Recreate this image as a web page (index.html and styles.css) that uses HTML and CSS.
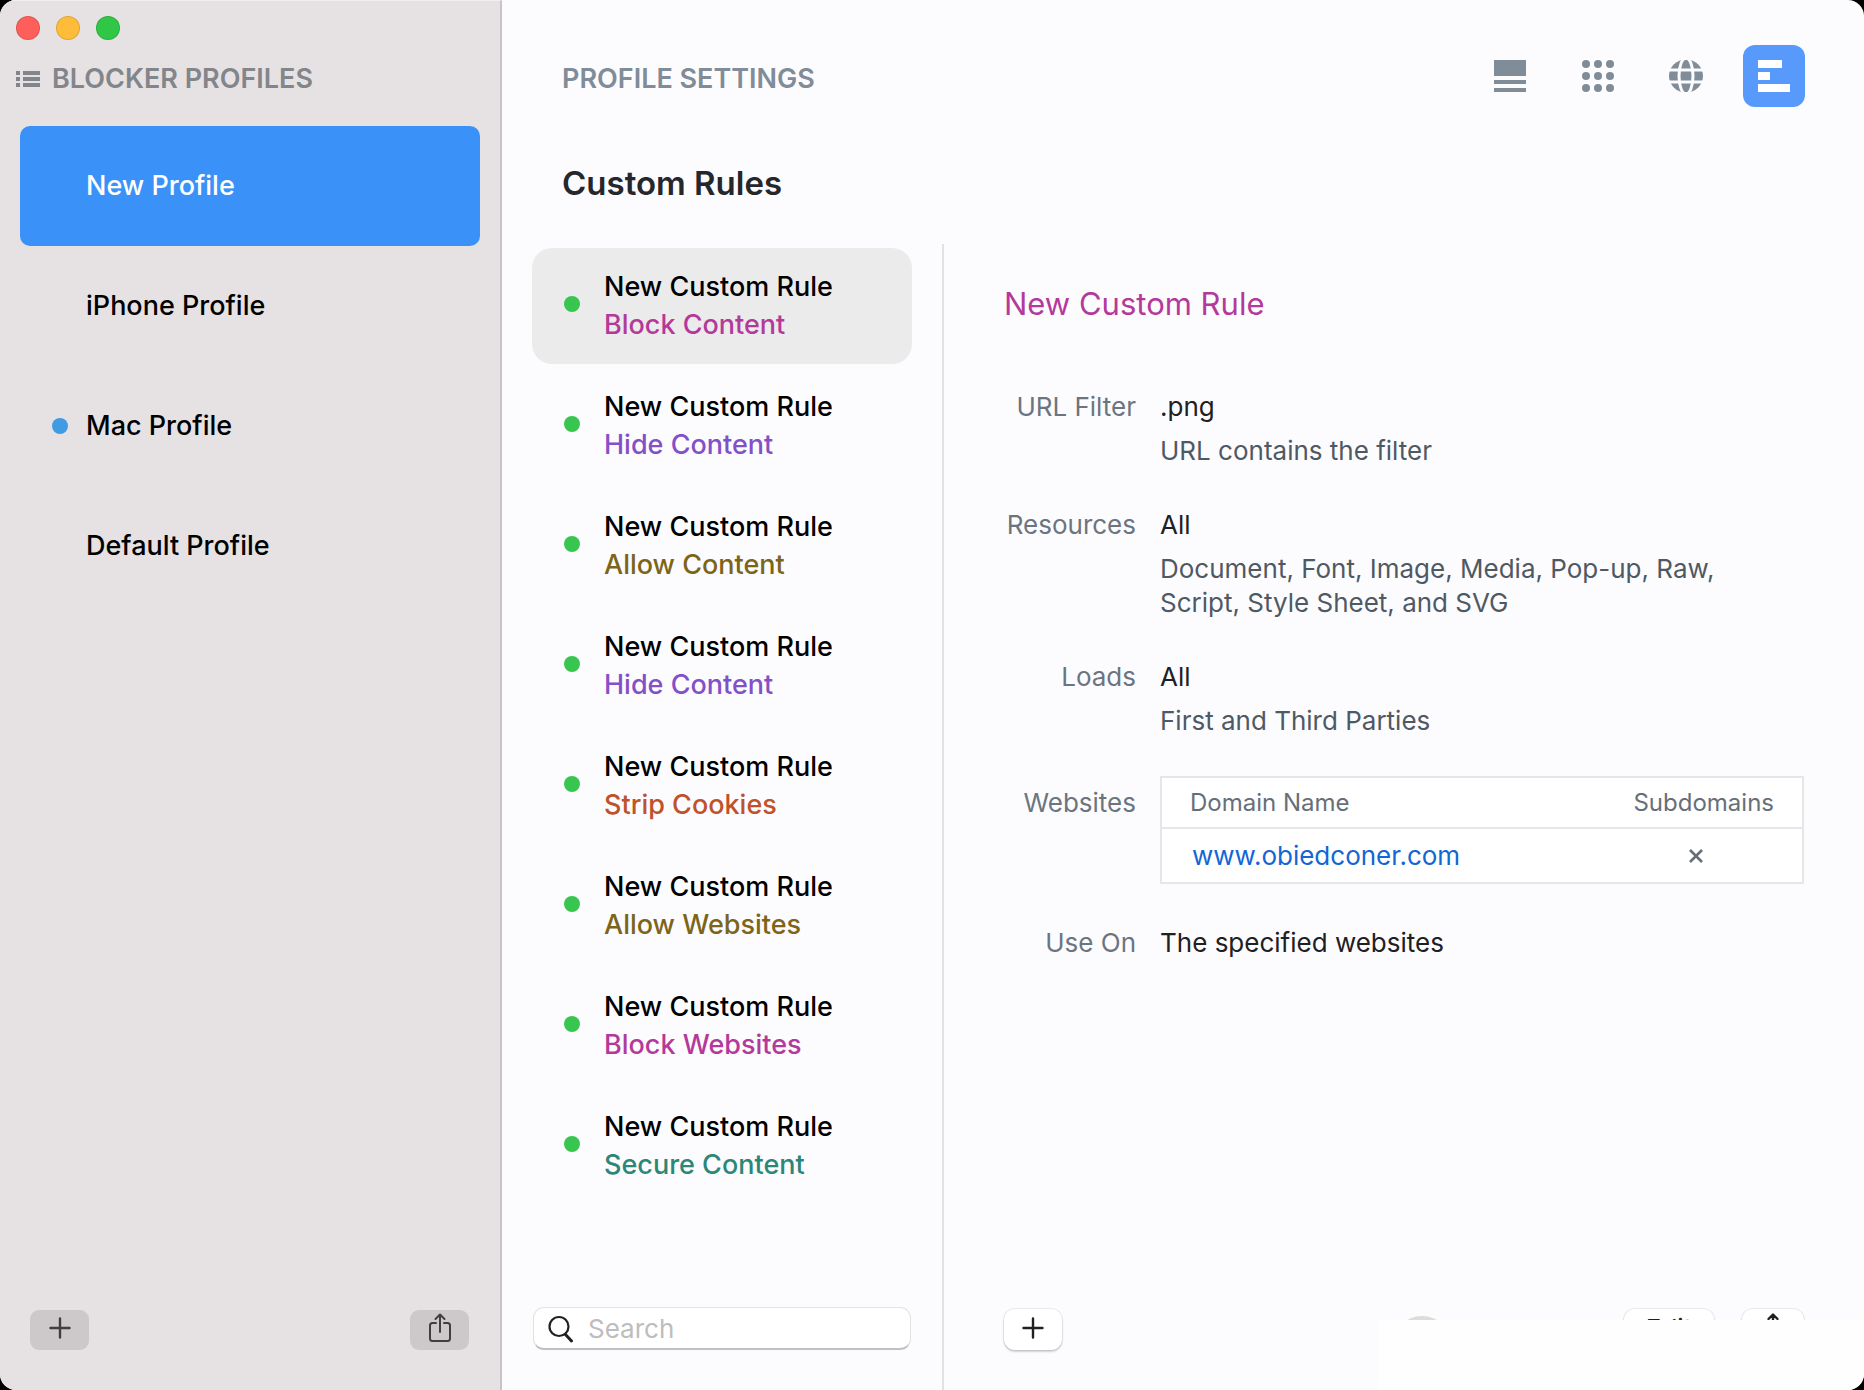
FILE: index.html
```html
<!DOCTYPE html>
<html lang="en">
<head>
    <meta charset="UTF-8">
    <meta name="viewport" content="width=device-width, initial-scale=1.0">
    <title>Blocker Profiles</title>
    <link rel="stylesheet" href="styles.css">
</head>
<body>
    <div class="window">
        <aside class="sidebar">
            <div class="window-controls">
                <button class="control close" aria-label="Close"></button>
                <button class="control minimize" aria-label="Minimize"></button>
                <button class="control maximize" aria-label="Zoom"></button>
            </div>
            <h2 class="caption sidebar-title">
                <svg width="24" height="16" viewBox="0 0 24 16" fill="currentColor">
                    <path d="M0 0h4v4H0zM0 6h4v4H0zM0 12h4v4H0zM7 0h17v4H7zM7 6h17v4H7zM7 12h17v4H7z"/>
                </svg>
                BLOCKER PROFILES
            </h2>
            <nav class="profiles">
                <button class="profile selected">New Profile</button>
                <button class="profile">iPhone Profile</button>
                <button class="profile active">Mac Profile</button>
                <button class="profile">Default Profile</button>
            </nav>
            <div class="sidebar-footer">
                <button class="side-btn" aria-label="Add profile">
                    <svg width="22" height="22" viewBox="0 0 22 22" fill="none" stroke="currentColor" stroke-width="2.400" stroke-linecap="round">
                        <path d="M11 1.500v19M1.500 11h19"/>
                    </svg>
                </button>
                <button class="side-btn" aria-label="Share profile">
                    <svg width="24" height="30" viewBox="0 0 24 30" fill="none" stroke="currentColor" stroke-width="2" stroke-linecap="round" stroke-linejoin="round">
                        <path d="M8 10H4.500Q2 10 2 12.500v13Q2 28 4.500 28h15q2.500 0 2.500-2.500v-13Q22 10 19.500 10H16M12 19V2M7.500 6L12 1.500 16.500 6"/>
                    </svg>
                </button>
            </div>
        </aside>

        <main class="main">
            <header class="topbar">
                <h2 class="caption">PROFILE SETTINGS</h2>
                <div class="tabs">
                    <button class="tab" aria-label="General">
                        <svg width="32" height="32" viewBox="0 0 32 32" fill="currentColor">
                            <path d="M0 0h32v16H0zM0 20h32v4H0zM0 28h32v4H0z"/>
                        </svg>
                    </button>
                    <button class="tab" aria-label="Resources">
                        <svg width="32" height="32" viewBox="0 0 32 32" fill="currentColor">
                            <circle cx="4" cy="4" r="4"/><circle cx="16" cy="4" r="4"/><circle cx="28" cy="4" r="4"/>
                            <circle cx="4" cy="16" r="4"/><circle cx="16" cy="16" r="4"/><circle cx="28" cy="16" r="4"/>
                            <circle cx="4" cy="28" r="4"/><circle cx="16" cy="28" r="4"/><circle cx="28" cy="28" r="4"/>
                        </svg>
                    </button>
                    <button class="tab" aria-label="Websites">
                        <svg width="34" height="32" viewBox="0 0 34 32">
                            <ellipse cx="17" cy="16" rx="17" ry="16.500" fill="currentColor"/>
                            <path class="globe-lines" d="M0 10h34M0 22h34"/>
                            <ellipse class="globe-lines" cx="17" cy="16" rx="7" ry="18"/>
                        </svg>
                    </button>
                    <button class="tab current" aria-label="Custom Rules">
                        <svg width="32" height="32" viewBox="0 0 32 32" fill="currentColor">
                            <path d="M0 0h24v8H0zM0 12h12v8H0zM0 24h32v8H0z"/>
                        </svg>
                    </button>
                </div>
            </header>
            <h1 class="page-title">Custom Rules</h1>

            <div class="content">
                <section class="rules">
                    <div class="rule-list">
                        <button class="rule block selected">New Custom Rule<span>Block Content</span></button>
                        <button class="rule hide">New Custom Rule<span>Hide Content</span></button>
                        <button class="rule allow">New Custom Rule<span>Allow Content</span></button>
                        <button class="rule hide">New Custom Rule<span>Hide Content</span></button>
                        <button class="rule strip">New Custom Rule<span>Strip Cookies</span></button>
                        <button class="rule allow">New Custom Rule<span>Allow Websites</span></button>
                        <button class="rule block">New Custom Rule<span>Block Websites</span></button>
                        <button class="rule secure">New Custom Rule<span>Secure Content</span></button>
                    </div>
                    <label class="search">
                        <svg width="26" height="28" viewBox="0 0 26 28" fill="none" stroke="currentColor" stroke-linecap="round">
                            <circle cx="11" cy="11.500" r="9.500" stroke-width="2.200"/>
                            <path d="M17.500 19.500l6 6.500" stroke-width="3"/>
                        </svg>
                        <input type="search" placeholder="Search" aria-label="Search">
                    </label>
                </section>

                <section class="detail">
                    <h2 class="detail-title">New Custom Rule</h2>
                    <dl class="fields">
                        <dt>URL Filter</dt>
                        <dd>.png<p>URL contains the filter</p></dd>
                        <dt>Resources</dt>
                        <dd>All<p>Document, Font, Image, Media, Pop-up, Raw, Script, Style Sheet, and SVG</p></dd>
                        <dt>Loads</dt>
                        <dd>All<p>First and Third Parties</p></dd>
                        <dt class="websites-label">Websites</dt>
                        <dd class="websites-field">
                            <table class="websites">
                                <thead>
                                    <tr><th>Domain Name</th><th class="sub">Subdomains</th></tr>
                                </thead>
                                <tbody>
                                    <tr>
                                        <td><a href="#">www.obiedconer.com</a></td>
                                        <td class="sub">
                                            <svg width="14" height="14" viewBox="0 0 14 14" fill="none" stroke="currentColor" stroke-width="2.600">
                                                <path d="M1 1l12 12M13 1L1 13"/>
                                            </svg>
                                        </td>
                                    </tr>
                                </tbody>
                            </table>
                        </dd>
                        <dt>Use On</dt>
                        <dd>The specified websites</dd>
                    </dl>
                    <div class="detail-footer">
                        <button class="btn add" aria-label="Add rule">
                            <svg width="22" height="22" viewBox="0 0 22 22" fill="none" stroke="currentColor" stroke-width="2.400" stroke-linecap="round">
                                <path d="M11 1.500v19M1.500 11h19"/>
                            </svg>
                        </button>
                        <button class="toggle" aria-label="Enabled"></button>
                        <button class="btn edit">Edit</button>
                        <button class="btn share" aria-label="Share rule">
                            <svg width="24" height="30" viewBox="0 0 24 30" fill="none" stroke="currentColor" stroke-width="2.400" stroke-linecap="round" stroke-linejoin="round">
                                <path d="M8 10H4.500Q2 10 2 12.500v13Q2 28 4.500 28h15q2.500 0 2.500-2.500v-13Q22 10 19.500 10H16M12 19V2M7.500 6L12 1.500 16.500 6"/>
                            </svg>
                        </button>
                    </div>
                </section>
            </div>
        </main>
        <div class="corner-cover"></div>
    </div>
</body>
</html>
```
FILE: styles.css
```css
* {
    box-sizing: border-box;
}
body {
    margin: 0;
    background: #000;
    font-family: Inter, "Liberation Sans", sans-serif;
    font-size: 26px;
    line-height: 34px;
    color: #1f2022;
}
h1, h2, p, dl, dd {
    margin: 0;
}
button {
    border: none;
    padding: 0;
    font: inherit;
    color: inherit;
    background: none;
    cursor: pointer;
}
svg {
    display: block;
    flex-shrink: 0;
}
.window {
    position: relative;
    display: flex;
    min-height: 100vh;
    border-radius: 16px;
    overflow: hidden;
    background: #fcfcff;
}
.caption {
    font-size: 27px;
    font-weight: 600;
    color: #808c97;
}

/* Sidebar */
.sidebar {
    display: flex;
    flex-direction: column;
    width: 502px;
    flex-shrink: 0;
    background: #e6e2e4;
    border-top: 1px solid #f1eeef;
    border-right: 2px solid #c7c3c7;
}
.window-controls {
    display: flex;
    gap: 16px;
    padding: 15px 16px 0;
}
.control {
    width: 24px;
    height: 24px;
    border-radius: 50%;
    border: 1px solid rgba(0, 0, 0, 0.12);
}
.close {
    background: #ff5f5a;
}
.minimize {
    background: #ffbc3a;
}
.maximize {
    background: #31c746;
}
.sidebar-title {
    display: flex;
    align-items: center;
    gap: 12px;
    padding: 22px 16px 0;
    color: #82868b;
}
.profiles {
    padding: 30px 20px 0;
}
.profile {
    display: flex;
    align-items: center;
    width: 100%;
    height: 120px;
    padding-left: 66px;
    border-radius: 10px;
    font-size: 27px;
    font-weight: 500;
    color: #000;
}
.profile.selected {
    background: #3a92f8;
    color: #fff;
}
.profile.active {
    padding-left: 32px;
}
.profile.active::before {
    content: "";
    width: 16px;
    height: 16px;
    margin-right: 18px;
    border-radius: 50%;
    background: #3f9be2;
}
.sidebar-footer {
    display: flex;
    justify-content: space-between;
    margin-top: auto;
    padding: 0 31px 40px 30px;
}
.side-btn {
    display: flex;
    align-items: center;
    justify-content: center;
    width: 59px;
    height: 40px;
    padding-bottom: 4px;
    border-radius: 9px;
    background: #cdc9ca;
    color: #423d3f;
}

/* Main area */
.main {
    display: flex;
    flex-direction: column;
    flex: 1;
    min-width: 0;
}
.topbar {
    display: flex;
    justify-content: space-between;
    align-items: center;
    padding: 45px 59px 0 60px;
}
.topbar .caption {
    padding-top: 6px;
}
.tabs {
    display: flex;
    gap: 26px;
}
.tab {
    display: flex;
    align-items: center;
    justify-content: center;
    width: 62px;
    height: 62px;
    border-radius: 12px;
    color: #808c97;
}
.tab.current {
    background: #589afc;
    color: #fff;
}
.globe-lines {
    fill: none;
    stroke: #fcfcff;
    stroke-width: 3;
}
.page-title {
    padding: 56px 60px 0;
    font-size: 33px;
    line-height: 40px;
    font-weight: 600;
    color: #26272b;
}
.content {
    display: flex;
    flex: 1;
    padding-top: 41px;
}

/* Rule list */
.rules {
    display: flex;
    flex-direction: column;
    justify-content: space-between;
    width: 442px;
    flex-shrink: 0;
    padding: 4px 30px 40px;
    border-right: 2px solid #e2e2e5;
}
.rule-list {
    display: flex;
    flex-direction: column;
    gap: 4px;
}
.rule {
    display: grid;
    grid-template-columns: 16px 1fr;
    column-gap: 24px;
    align-items: center;
    width: 380px;
    height: 116px;
    padding: 20px 32px;
    border-radius: 20px;
    font-size: 27px;
    line-height: 38px;
    font-weight: 500;
    text-align: left;
    color: #000;
}
.rule::before {
    content: "";
    grid-row: 1 / 3;
    width: 16px;
    height: 16px;
    margin-bottom: 4px;
    border-radius: 50%;
    background: #38c550;
}
.rule span {
    grid-column: 2;
}
.rule.selected {
    background: #ebebeb;
}
.block span {
    color: #b4399b;
}
.hide span {
    color: #8350c8;
}
.allow span {
    color: #7c6519;
}
.strip span {
    color: #c0522b;
}
.secure span {
    color: #2c8777;
}
.search {
    display: flex;
    align-items: center;
    gap: 14px;
    height: 43px;
    padding: 2px 14px 0;
    margin: 0 1px;
    border: 1px solid #e3e3e6;
    border-bottom: 2px solid #c0c0c3;
    border-radius: 11px;
    background: #fff;
}
.search input {
    flex: 1;
    min-width: 0;
    padding: 0;
    border: none;
    outline: none;
    background: none;
    font: inherit;
    color: inherit;
}
.search input::placeholder {
    color: #bdbdbd;
}

/* Rule detail */
.detail {
    display: flex;
    flex-direction: column;
    flex: 1;
    min-width: 0;
    padding: 40px 60px 0;
}
.detail-title {
    font-size: 31px;
    line-height: 40px;
    font-weight: 400;
    color: #b4399b;
}
.fields {
    display: grid;
    grid-template-columns: 132px 1fr;
    gap: 40px 24px;
    padding-top: 66px;
}
.fields dt {
    text-align: right;
    white-space: nowrap;
    color: #6b757f;
}
.fields p {
    margin-top: 10px;
    padding-right: 40px;
    color: #4f5963;
}
.fields .websites-label {
    padding-top: 8px;
}
.websites-field {
    margin: -2px 0 2px;
}
.websites {
    width: 100%;
    border: 2px solid #e5e6e8;
    border-collapse: collapse;
    background: #fff;
    color: #666f79;
}
.websites th {
    height: 51px;
    padding: 0 28px;
    border-bottom: 2px solid #e5e6e8;
    font-size: 24px;
    font-weight: 400;
    text-align: left;
}
.websites td {
    height: 55px;
    padding: 0 30px;
}
.websites .sub {
    width: 214px;
    padding: 0 28px;
    text-align: right;
}
.websites td.sub svg {
    margin: 0 auto;
}
.websites a {
    color: #1266d6;
    text-decoration: none;
}
.detail-footer {
    display: flex;
    align-items: flex-start;
    margin-top: auto;
    height: 81px;
}
.btn {
    display: flex;
    align-items: center;
    justify-content: center;
    height: 41px;
    padding-bottom: 4px;
    border-radius: 11px;
    background: #fff;
    box-shadow: 0 0 1px 1px rgba(0, 0, 0, 0.08), 0 2px 2px rgba(0, 0, 0, 0.16);
}
.add {
    width: 58px;
}
.toggle {
    width: 60px;
    height: 60px;
    margin: 7px auto 0 330px;
    border-radius: 50%;
    background: #dcdcdd;
}
.edit {
    width: 90px;
    margin-right: 28px;
    padding-bottom: 2px;
}
.share {
    width: 62px;
}

/* Blank panel resting over the bottom right corner */
.corner-cover {
    position: absolute;
    right: 0;
    bottom: 0;
    width: 486px;
    height: 70px;
    background: #fefefe;
}
```
